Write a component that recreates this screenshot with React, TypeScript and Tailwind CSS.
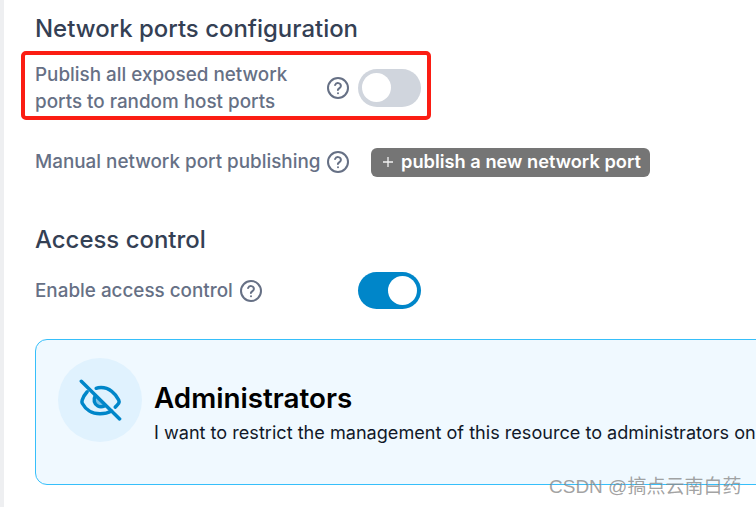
import React from "react";

function Help() {
  return (
    <svg width="24" height="24" viewBox="0 0 24 24" fill="none" stroke="#667085" strokeWidth="2" strokeLinecap="round" strokeLinejoin="round" className="shrink-0">
      <circle cx="12" cy="12" r="10" />
      <path d="M9.1 9a3 3 0 0 1 5.8 1c0 2-3 2.6-3 4" />
      <path d="M12 17.2h.01" />
    </svg>
  );
}

function Toggle({ on }: { on?: boolean }) {
  return (
    <div className={on ? "flex h-[37px] w-[63px] shrink-0 items-center justify-end rounded-full bg-[#0086c9] px-[4px]" : "flex h-[38px] w-[63px] shrink-0 items-center justify-start rounded-full bg-[#d0d5dd] px-[4px]"}>
      <div className="h-[29px] w-[29px] rounded-full bg-white" />
    </div>
  );
}

export default function App() {
  return (
    <div className="relative h-[507px] w-[756px] overflow-hidden bg-white font-['Inter',sans-serif]">
      <div className="flex h-full">
        <div className="h-full w-[4px] shrink-0 bg-[#eeeff1]" />
        <div className="w-[752px] shrink-0 pl-[17px] pt-[14px]">
          <h2 className="ml-[14px] h-[30px] text-[23.95px] font-medium leading-[30px] text-[#344054]">Network ports configuration</h2>
          <div className="mt-[7px] flex h-[69px] w-[410px] items-center rounded-[5px] border-[4px] border-[#fb1d13] pl-[10px] pt-[4px]">
            <div className="w-[291px] text-[18.85px] font-medium leading-[27px] text-[#667085]">
              Publish all exposed network<br />ports to random host ports
            </div>
            <Help />
            <div className="ml-[8px]"><Toggle /></div>
          </div>
          <div className="ml-[14px] mt-[28px] flex h-[29px] items-center">
            <div className="flex w-[336px] shrink-0 items-center">
              <span className="text-[18.85px] font-medium text-[#667085]">Manual network port publishing</span>
              <div className="ml-[6px]"><Help /></div>
            </div>
            <div className="flex h-[29px] items-center rounded-[6px] bg-[#757575] pl-[12px] pr-[9px] text-white">
              <svg width="10" height="10" viewBox="0 0 10 10" stroke="#f2f2f2" strokeWidth="1.3" className="mr-[8px] -mt-[2px] shrink-0">
                <path d="M5 0v10M0 5h10" />
              </svg>
              <span className="-mt-[1px] text-[18.25px] font-semibold">publish a new network port</span>
            </div>
          </div>
          <h2 className="ml-[14px] mt-[48px] h-[30px] text-[23.95px] font-medium leading-[30px] text-[#344054]">Access control</h2>
          <div className="ml-[14px] mt-[17px] flex h-[37px] items-center">
            <div className="flex w-[323px] shrink-0 items-center pt-[2px]">
              <span className="text-[18.85px] font-medium text-[#667085]">Enable access control</span>
              <div className="ml-[6px]"><Help /></div>
            </div>
            <Toggle on />
          </div>
          <div className="ml-[14px] mt-[30px] flex h-[146px] w-[800px] rounded-l-[12px] border border-[#36bffa] bg-[#f0f9ff] pl-[22px] pt-[18px]">
            <div className="flex h-[84px] w-[84px] shrink-0 items-center justify-center rounded-full bg-[#e0f2fe]">
              <svg width="44" height="44" viewBox="0 0 24 24" fill="none" stroke="#0086c9" strokeWidth="1.9" strokeLinecap="round" strokeLinejoin="round">
                <path d="M9.9 5.600C10.900 5.200 11.900 5.200 12.600 5.200C17 5.200 20.500 8.500 22.200 12C22.500 12.600 22.500 13.200 22.200 13.800C21.600 14.600 21 15.300 20.300 15.900" />
                <path d="M5 7.500C3.800 8.800 2.800 10.500 2.300 12C2.100 12.600 2.100 13.200 2.300 13.800C4 17 7.500 19.500 12 19.500C14.300 19.500 16.500 19 18.300 18" />
                <path d="M9.400 9.800C8.200 11.800 8.800 14.300 10.800 15.300C12 15.900 13.300 15.800 14.500 15.200" fill="#0086c9" fillOpacity="0.45" />
                <path d="M1.800 1.800 22.700 22.300" />
              </svg>
            </div>
            <div className="ml-[12px] pt-[23px]">
              <div className="text-[27.8px] font-semibold leading-[34px] text-black">Administrators</div>
              <div className="mt-[4px] whitespace-nowrap text-[18.1px] leading-[26px] text-[#101828]">I want to restrict the management of this resource to administrators only</div>
            </div>
          </div>
        </div>
      </div>
      <div className="absolute left-[549px] top-[475px] whitespace-nowrap font-['Liberation_Sans','Noto_Sans_CJK_SC',sans-serif] text-[19px] leading-[24px] text-[#8a8a8a]/80">CSDN @搞点云南白药</div>
    </div>
  );
}
